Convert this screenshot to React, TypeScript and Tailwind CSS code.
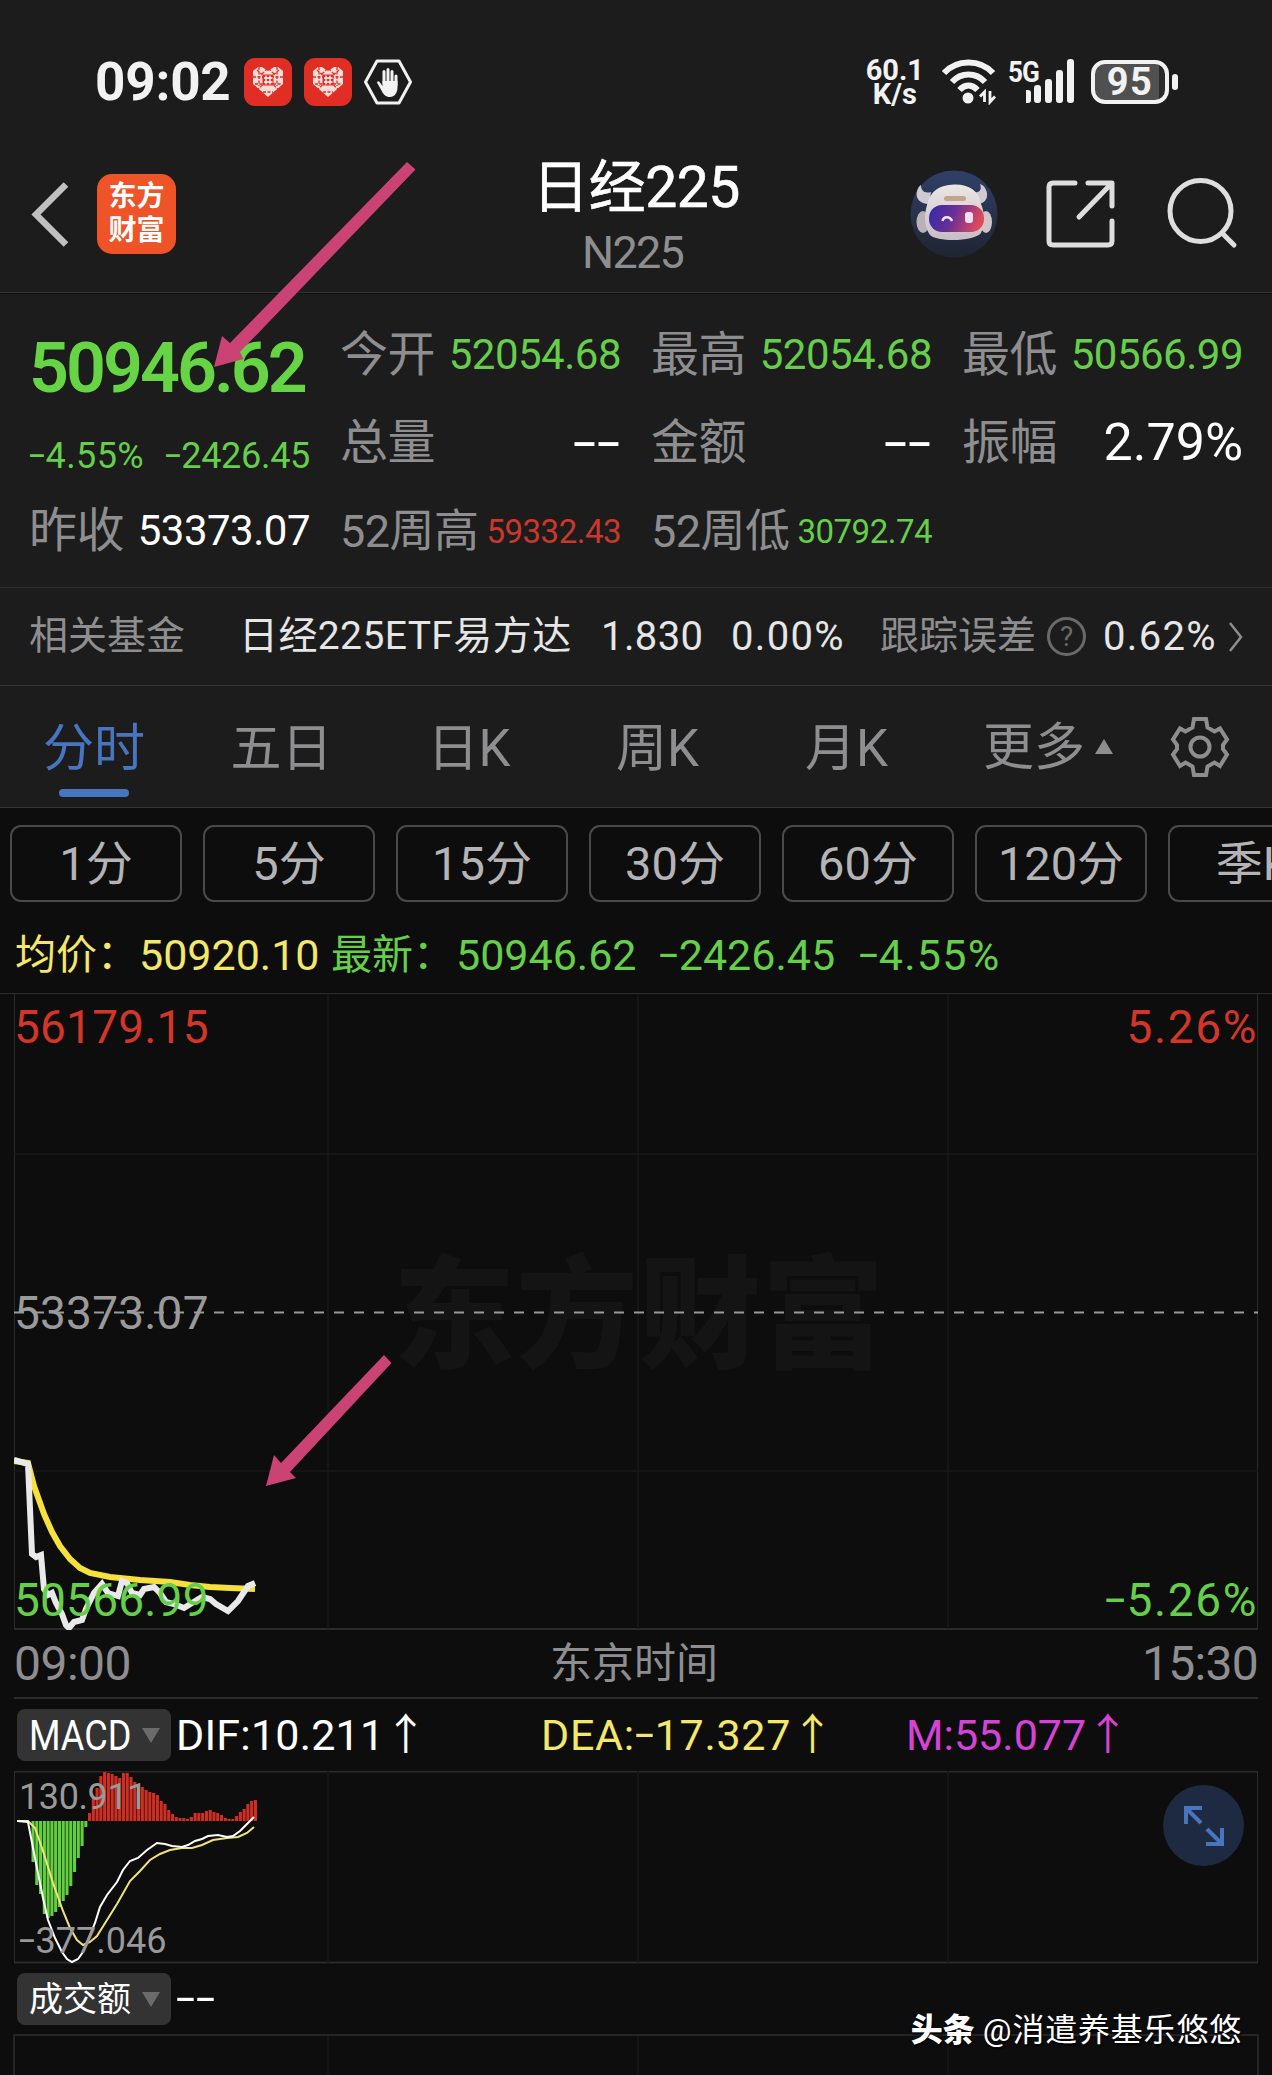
import type { ReactNode } from "react";

const PRICE_LINE =
  "0,466 14,470 18,560 22,563 27,561 30,595 34,601 38,599 42,609 48,620 52,631 55,634 60,628 68,626 72,615 80,599 88,590 94,599 104,602 108,587 113,589 118,599 126,601 130,595 140,593 146,599 152,608 160,610 170,614 178,609 188,603 196,605 202,610 214,617 224,607 234,592 241,589";

const AVG_LINE =
  "0,467 14,469 20,492 30,520 38,538 46,552 56,565 66,574 76,579 96,583 126,586 156,588 176,591 196,593 216,594 241,595";

// Histogram heights, measured from the zero axis
const GREEN_BARS = [41, 64, 73, 93, 97, 95, 91, 86, 80, 74, 65, 51, 37, 25, 6];
const RED_BARS = [
  8, 24, 33, 45, 49, 48, 47, 45, 43, 48, 48, 44, 39, 36, 34, 31, 29, 28, 26, 20, 17, 11, 7, 4, 3, 3, 2, 4, 8, 8, 8,
  10, 11, 9, 8, 6, 3, 2, 2, 5, 9, 12, 17, 20, 21,
];

const DIF_LINE =
  "3,50 14,51 19,77 24,102 29,127 34,149 41,167 48,181 53,188 58,191 64,188 69,181 74,169 81,152 86,136 93,124 103,111 109,99 116,90 124,87 133,79 143,72 151,73 158,75 168,76 174,74 181,70 188,68 194,65 204,64 213,66 219,65 226,60 233,53 240,46";

const DEA_LINE =
  "3,50 14,50 21,57 29,80 39,112 49,140 56,157 63,169 69,174 76,171 83,165 93,149 103,133 116,110 126,100 136,89 146,83 156,79 168,77 178,77 188,74 199,69 213,67 224,66 233,62 240,56";

const PERIODS = ["1分", "5分", "15分", "30分", "60分", "120分", "季K"];

/** Roboto's hyphen is short, so stretch it to about one digit. */
function Minus() {
  return <span className="inline-block w-[0.46em] origin-left -translate-y-[0.04em] scale-x-160">-</span>;
}

function NoValue() {
  return (
    <span className="flex pt-1 text-[52px] leading-none text-white">
      <Minus />
      <Minus />
    </span>
  );
}

function HeartBadge() {
  return (
    <div className="flex h-12 w-12 items-center justify-center rounded-[11px] bg-[#e02e24]">
      <svg width="36" height="32" viewBox="0 0 36 32" aria-hidden>
        <path d="M18 31L3 18V5L8 1H12L18 5L24 1H28L33 5V18Z" fill="#f7dcd8" />
        <path
          d="M3 11H33M7 4L29 24M29 4L7 24M9 1V20M27 1V20M5 18H31M12 8L18 2M24 8L18 2M13 26H23"
          stroke="#e02e24"
          strokeWidth="1.3"
          strokeDasharray="3 1.5"
          fill="none"
        />
        <rect x="12.5" y="8.5" width="11" height="11" fill="#e02e24" />
        <path d="M14 12H22.5M14 16H22.5M16 9.5V18.5M20 9.5V18.5" stroke="#fff" strokeWidth="1.3" />
      </svg>
    </div>
  );
}

function HandBadge() {
  return (
    <svg width="48" height="46" viewBox="0 0 48 46" fill="none" aria-hidden>
      <path d="M13 2H35L46.5 23L35 44H13L1.5 23Z" stroke="#f2f2f2" strokeWidth="3" strokeLinejoin="round" />
      <path d="M20 24V12.5M24 23V10.5M28 24V12.5M32 26V17" stroke="#f2f2f2" strokeWidth="3" strokeLinecap="round" />
      <path
        d="M18.5 22H33.5V28C33.5 34 30.5 38 26 38C21.5 38 19.5 35.5 17.5 31.5L13.2 24C12.5 22.5 14.5 21.5 15.6 23L18.5 27Z"
        fill="#f2f2f2"
      />
    </svg>
  );
}

function StatusBar() {
  return (
    <div className="flex h-[164px] items-center pr-[94px] pl-[95px]">
      <div className="w-[149px] text-[53px] leading-none font-bold tracking-[-0.2px] text-[#f2f2f2]">09:02</div>
      <div className="flex items-center gap-3">
        <HeartBadge />
        <HeartBadge />
        <HandBadge />
      </div>
      <div className="ml-auto flex items-center text-[#f2f2f2]">
        <div className="mr-[17px] text-center text-[29px] leading-[24px] font-bold">
          <div>60.1</div>
          <div>K/s</div>
        </div>
        <svg width="56" height="46" viewBox="0 0 56 46" fill="none" aria-hidden>
          <path d="M3 14C16 0 39 0 52 14" stroke="#f2f2f2" strokeWidth="6" />
          <path d="M11 23C20 13 35 13 44 23" stroke="#f2f2f2" strokeWidth="6" />
          <path d="M18.5 31C24 25 31 25 36.5 31" stroke="#f2f2f2" strokeWidth="6" />
          <circle cx="27" cy="39" r="5.5" fill="#f2f2f2" />
          <path d="M43.5 43V33L39 37.5M49 32V43L54 37.5" stroke="#f2f2f2" strokeWidth="2.8" />
        </svg>
        <div className="ml-[11px] flex h-[46px] w-[68px]">
          <span className="w-[18px] origin-left scale-x-90 text-[29px] leading-[26px] font-bold tracking-[-1px]">
            5G
          </span>
          <svg width="50" height="46" viewBox="0 0 50 46" fill="#f2f2f2" aria-hidden>
            <rect x="-2" y="31" width="7" height="13" rx="3" />
            <rect x="8" y="26" width="7" height="18" rx="3" />
            <rect x="19" y="20" width="7" height="24" rx="3" />
            <rect x="30" y="11" width="7" height="33" rx="3" />
            <rect x="41" y="0" width="7" height="44" rx="3" />
          </svg>
        </div>
        <div className="ml-[15px] flex h-11 w-[78px] items-center justify-center rounded-[14px] border-[4px] border-[#f2f2f2] bg-linear-to-r from-[#505050] from-92% to-[#2a2a2a] to-92% text-[38px] leading-none font-bold tracking-[1.5px]">
          95
        </div>
        <div className="ml-[3px] h-4 w-[6px] rounded-[3px] bg-[#f2f2f2]" />
      </div>
    </div>
  );
}

function RobotAvatar() {
  return (
    <svg width="88" height="88" viewBox="0 0 88 88" aria-hidden>
      <defs>
        <linearGradient id="robot-bg" x1="0" y1="0" x2="0" y2="1">
          <stop offset="0" stopColor="#2f4068" />
          <stop offset="1" stopColor="#1f2430" />
        </linearGradient>
        <linearGradient id="robot-visor" x1="0" y1="0" x2="1" y2="0.2">
          <stop offset="0" stopColor="#2f2ba8" />
          <stop offset="0.5" stopColor="#6b2f96" />
          <stop offset="1" stopColor="#dc4a5c" />
        </linearGradient>
        <linearGradient id="robot-head" x1="0" y1="0" x2="0" y2="1">
          <stop offset="0" stopColor="#ece6e6" />
          <stop offset="1" stopColor="#c8bdc4" />
        </linearGradient>
      </defs>
      <circle cx="44" cy="44" r="43.5" fill="url(#robot-bg)" />
      <path
        d="M19 34C10 34 5 28 7 21C8 18 9 16 11 15C11 20 14 24 21 22ZM69 34C76 33 79 26 76 20C75 17 73 15 70 14C72 19 70 23 65 22Z"
        fill="#cfcad2"
      />
      <ellipse cx="13" cy="52" rx="6.5" ry="11" fill="#b9b0b8" />
      <ellipse cx="76" cy="52" rx="6" ry="11" fill="#d0c4c8" />
      <path
        d="M44 14.5C58 14 69 20 71 34C75 43 75 55 71 63C64 72 27 72 20 65C14 57 14 45 17 35C20 21 29 15 44 14.5Z"
        fill="url(#robot-head)"
      />
      <rect x="34" y="26" width="22" height="5" rx="2.5" fill="#c5a48c" />
      <rect x="19" y="35" width="55" height="27" rx="13" fill="url(#robot-visor)" />
      <path d="M32.5 51C33.5 46 40 46 42 51" stroke="#eee8ff" strokeWidth="2.5" fill="none" />
      <rect x="55" y="42" width="8" height="11" rx="3" fill="#f5dff0" />
    </svg>
  );
}

function Header() {
  return (
    <header className="h-[294px] border-b-2 border-[#101010] bg-[#1c1c1c]">
      <StatusBar />
      <div className="grid h-[129px] grid-cols-[1fr_300px_1fr] border-b border-[#343434]">
        <div className="flex items-start pt-[10px] pl-[30px]">
          <svg className="mt-2 mr-7" width="39" height="66" viewBox="0 0 39 66" fill="none" aria-hidden>
            <path d="M36 2.5L6 32.5L36 62.5" stroke="#c0c0c0" strokeWidth="6.5" />
          </svg>
          <div className="flex h-20 w-[79px] flex-col items-center justify-center rounded-[15px] bg-[#ee5427] text-[28px] leading-[34px] font-bold text-white">
            <span>东方</span>
            <span>财富</span>
          </div>
        </div>
        <div className="text-center">
          <div className="mt-[-9px] text-[57px] leading-[66px] tracking-[-0.5px] text-white [-webkit-text-stroke:0.6px_#fff]">
            日经225
          </div>
          <div className="mt-[7px] mr-[7px] text-[45px] leading-[50px] tracking-[-1.8px] text-[#8e8e90]">N225</div>
        </div>
        <div className="flex justify-end pt-[6px] pr-[33px]">
          <RobotAvatar />
          <svg className="mt-[9px] ml-[48px]" width="70" height="70" viewBox="0 0 70 70" fill="none" aria-hidden>
            <path
              d="M29 4H7Q3 4 3 8V62Q3 66 7 66H62Q66 66 66 62V42M66 27V4H42M65 5L33 38"
              stroke="#dedede"
              strokeWidth="5"
              strokeLinejoin="round"
              strokeLinecap="round"
            />
          </svg>
          <svg className="mt-[6px] ml-[49px]" width="74" height="74" viewBox="0 0 74 74" fill="none" aria-hidden>
            <circle cx="35.5" cy="35" r="30.5" stroke="#dedede" strokeWidth="5" />
            <path d="M57 57L69 69" stroke="#dedede" strokeWidth="5" strokeLinecap="round" />
          </svg>
        </div>
      </div>
    </header>
  );
}

function Stat({ label, children }: { label: string; children: ReactNode }) {
  return (
    <div className="flex h-[88px] items-center justify-between text-[48px] leading-none tracking-[-0.5px] text-[#8e8e90]">
      <span>{label}</span>
      {children}
    </div>
  );
}

function QuotePanel() {
  return (
    <section className="grid h-[294px] grid-cols-[repeat(4,281px)] content-start gap-x-[30px] border-b border-[#2e2e2e] bg-[#1c1c1c] px-[29px] pt-[17px] whitespace-nowrap">
      <div className="row-span-2 flex flex-col">
        <div className="mt-[19px] text-[70px] leading-[76px] font-semibold tracking-[-3px] text-[#66d444]">
          50946.62
        </div>
        <div className="mt-[30px] flex justify-between text-[36px] leading-[40px] tracking-[0.4px] text-[#66cf4a]">
          <span>
            <Minus />
            4.55%
          </span>
          <span className="tracking-[-0.3px]">
            <Minus />
            2426.45
          </span>
        </div>
      </div>
      <Stat label="今开">
        <span className="text-[42px] text-[#66cf4a]">52054.68</span>
      </Stat>
      <Stat label="最高">
        <span className="text-[42px] text-[#66cf4a]">52054.68</span>
      </Stat>
      <Stat label="最低">
        <span className="text-[42px] text-[#66cf4a]">50566.99</span>
      </Stat>
      <Stat label="总量">
        <NoValue />
      </Stat>
      <Stat label="金额">
        <NoValue />
      </Stat>
      <Stat label="振幅">
        <span className="text-[52px] tracking-[0px] text-white">2.79%</span>
      </Stat>
      <Stat label="昨收">
        <span className="text-[42px] text-white">53373.07</span>
      </Stat>
      <div className="flex h-[88px] items-center justify-between text-[45px] leading-none tracking-[-0.5px] text-[#8e8e90]">
        <span>52周高</span>
        <span className="text-[33px] tracking-[-0.5px] text-[#c9382c]">59332.43</span>
      </div>
      <div className="flex h-[88px] items-center justify-between text-[45px] leading-none tracking-[-0.5px] text-[#8e8e90]">
        <span>52周低</span>
        <span className="text-[33px] tracking-[-0.5px] text-[#66cf4a]">30792.74</span>
      </div>
    </section>
  );
}

function RelatedFund() {
  return (
    <section className="flex h-[98px] items-center border-b border-[#363636] bg-[#1c1c1c] pl-[29px] text-[39px] leading-none whitespace-nowrap text-[#e6e6e6]">
      <span className="w-[210px] text-[#8e8e90]">相关基金</span>
      <span className="w-[362px] tracking-[0.4px]">日经225ETF易方达</span>
      <span className="w-[130px] text-[40px] tracking-[0.4px]">1.830</span>
      <span className="w-[149px] text-[40px] tracking-[1.3px]">0.00%</span>
      <span className="w-[167px] text-[#8e8e90]">跟踪误差</span>
      <span className="flex h-[39px] w-[39px] items-center justify-center rounded-full border-[3px] border-[#6a6a6c] text-[28px] text-[#6a6a6c]">
        ?
      </span>
      <span className="ml-[17px] w-[125px] text-[40px] tracking-[1.3px]">0.62%</span>
      <svg width="16" height="34" viewBox="0 0 16 34" fill="none" aria-hidden>
        <path d="M2 3L13 17L2 31" stroke="#8e8e90" strokeWidth="2.5" />
      </svg>
    </section>
  );
}

function ChartTabs() {
  return (
    <nav className="flex h-[122px] border-b border-[#363636] bg-[#1c1c1c] text-[51px] leading-[60px] text-[#8e8e90]">
      <div className="flex w-[188px] flex-col items-center pt-[33px] text-[#4775bf]">
        分时
        <div className="mt-[10px] h-2 w-[70px] rounded-full bg-[#4775bf]" />
      </div>
      <div className="w-[187px] pt-[33px] text-center">五日</div>
      <div className="w-[188px] pt-[33px] text-center">日K</div>
      <div className="w-[189px] pt-[33px] text-center">周K</div>
      <div className="w-[189px] pt-[33px] text-center">月K</div>
      <div className="flex w-[187px] items-center pt-[3px] pl-[42px]">
        更多
        <svg className="mb-[3px] ml-[10px]" width="18" height="15" viewBox="0 0 18 15" aria-hidden>
          <path d="M9 0L18 15H0Z" fill="#8e8e90" />
        </svg>
      </div>
      <div className="pt-[29px] pl-[40px]">
        <svg width="64" height="64" viewBox="0 0 64 64" fill="none" stroke="#8e8e90" strokeWidth="4" aria-hidden>
          <path d="M26 4H38L39.5 12.5L46.5 16.5L52 13.5L59 24.5L55 30V34L59 39.5L52 51L46.5 47.5L39.5 51.5L38 60H26L24.5 51.5L17.5 47.5L12 51L5 39.5L9 34V30L5 24.5L12 13.5L17.5 16.5L24.5 12.5Z" />
          <circle cx="32" cy="32" r="9.5" />
        </svg>
      </div>
    </nav>
  );
}

function PeriodChips() {
  return (
    <div className="flex gap-[21px] overflow-hidden pt-[17px] pl-[10px]">
      {PERIODS.map((p) => (
        <div
          key={p}
          className="flex h-[77px] w-[172px] shrink-0 items-center justify-center rounded-[11px] border-2 border-[#4a4a4a] text-[47px] leading-none text-[#b4b4b6]"
        >
          {p}
        </div>
      ))}
    </div>
  );
}

function PriceChart() {
  return (
    <div className="relative mx-[14px] h-[636px] text-[46px] leading-none">
      <div className="absolute inset-x-0 top-[236px] pl-[6px] text-center font-['Noto_Sans_CJK_SC'] text-[122px] leading-[150px] font-black tracking-[1px] text-[#141414]">
        东方财富
      </div>
      <svg className="absolute inset-0" width="1244" height="636" viewBox="0 0 1244 636" fill="none" aria-hidden>
        <path d="M0 0V635H1244V0" stroke="#2b2b2b" strokeWidth="2" />
        <path d="M314 0V635M624 0V635M934 0V635M0 160H1244M0 477H1244" stroke="#191919" strokeWidth="1.5" />
        <path d="M0 318.5H1244" stroke="#9a9a9a" strokeWidth="2" strokeDasharray="10 10" />
        <polyline points={AVG_LINE} stroke="#f6e13c" strokeWidth="6" />
        <polyline points={PRICE_LINE} stroke="#e9e9e9" strokeWidth="6" />
      </svg>
      <span className="absolute top-[10px] left-0 tracking-[0.2px] text-[#d33528]">56179.15</span>
      <span className="absolute top-[10px] right-0 tracking-[1.6px] text-[#d33528]">5.26%</span>
      <span className="absolute top-[296px] left-0 tracking-[0.2px] text-[#9a9a9a]">53373.07</span>
      <span className="absolute top-[583px] left-0 tracking-[0.2px] text-[#66cf4a]">50566.99</span>
      <span className="absolute top-[583px] right-0 tracking-[1.6px] text-[#66cf4a]">
        <Minus />
        5.26%
      </span>
    </div>
  );
}

function IndicatorPill({ children }: { children: ReactNode }) {
  return (
    <div className="flex h-[52px] w-[154px] items-center rounded-[8px] bg-[#333] pl-[12px] whitespace-nowrap text-white">
      <div className="w-[100px]">{children}</div>
      <svg className="ml-[13px]" width="18" height="15" viewBox="0 0 18 15" aria-hidden>
        <path d="M0 0H18L9 15Z" fill="#6b6b6b" />
      </svg>
    </div>
  );
}

function MacdChart() {
  return (
    <div className="relative mx-[14px] h-[193px] text-[36px] leading-none text-[#9a9a9a]">
      <svg className="absolute inset-0" width="1244" height="193" viewBox="0 0 1244 193" fill="none" aria-hidden>
        <path d="M0 191.5V0.5H1244V191.5Z" stroke="#2b2b2b" strokeWidth="2" />
        <path d="M314 0V192M624 0V192M934 0V192" stroke="#191919" strokeWidth="1.5" />
        {GREEN_BARS.map((h, i) => (
          <rect key={i} x={17.5 + i * 3.77} y={50} width="3.1" height={h} fill="#62cf40" />
        ))}
        {RED_BARS.map((h, i) => (
          <rect key={i} x={74 + i * 3.77} y={50 - h} width="3.1" height={h} fill="#cf2e22" />
        ))}
        <polyline points={DEA_LINE} stroke="#f0e478" strokeWidth="2" />
        <polyline points={DIF_LINE} stroke="#fff" strokeWidth="2" />
      </svg>
      <span className="absolute top-[8px] left-[5px] tracking-[-0.4px]">130.911</span>
      <span className="absolute top-[152px] left-[5px]">
        <Minus />
        377.046
      </span>
      <button
        type="button"
        className="absolute top-[14px] right-[14px] flex h-[81px] w-[81px] items-center justify-center rounded-full bg-[#1d2a42]"
      >
        <svg width="40" height="40" viewBox="0 0 40 40" fill="none" stroke="#4775bf" strokeWidth="4" aria-hidden>
          <path d="M18 2H2V18M2 2L17 17M38 22V38H22M38 38L23 23" />
        </svg>
      </button>
    </div>
  );
}

function Arrows() {
  return (
    <svg
      className="pointer-events-none absolute inset-0"
      width="1272"
      height="2075"
      viewBox="0 0 1272 2075"
      fill="#cb4374"
      aria-hidden
    >
      <path d="M407 162L415.5 169.5L240 352L243.5 359L214 367L222 336L230 343Z" />
      <path d="M384 1355L391.5 1363L290 1472L296 1478L266 1486L274 1455L281 1463Z" />
    </svg>
  );
}

export default function App() {
  return (
    <div className="relative h-[2075px] w-[1272px] overflow-hidden bg-[#0d0d0d] font-[Roboto,'Noto_Sans_CJK_SC',sans-serif]">
      <Header />
      <QuotePanel />
      <RelatedFund />
      <ChartTabs />
      <PeriodChips />
      <div className="flex h-[92px] items-center border-b border-[#2b2b2b] pt-[16px] pl-[15px] text-[43px] leading-none whitespace-nowrap text-[#66cf4a]">
        <span className="flex w-[316px] items-center text-[#f3e76c]">
          <span className="w-[124px] text-[41px]">均价：</span>50920.10
        </span>
        <span className="w-[125px] text-[41px]">最新：</span>
        <span className="w-[203px]">50946.62</span>
        <span className="w-[200px]">
          <Minus />
          2426.45
        </span>
        <span className="tracking-[1.3px]">
          <Minus />
          4.55%
        </span>
      </div>
      <PriceChart />
      <div className="mx-[14px] grid h-[69px] grid-cols-3 items-center border-b-2 border-[#2b2b2b] text-[48px] leading-none tracking-[-0.5px] text-[#8e8e90]">
        <span>09:00</span>
        <span className="pr-1 text-center text-[42px] tracking-[0px]">东京时间</span>
        <span className="text-right tracking-[-0.7px]">15:30</span>
      </div>
      <div className="flex h-[72px] items-center pl-[17px] text-[43px] leading-none">
        <IndicatorPill>
          <span className="inline-block origin-left scale-x-84">MACD</span>
        </IndicatorPill>
        <span className="ml-[5px] w-[365px] tracking-[0.2px] text-white">DIF:10.211↑</span>
        <span className="w-[365px] tracking-[0.7px] text-[#f3e76c]">
          DEA:
          <Minus />
          17.327↑
        </span>
        <span className="text-[#d443d4]">M:55.077↑</span>
      </div>
      <MacdChart />
      <div className="flex h-[70px] items-center pl-[17px] text-[34px] leading-none">
        <IndicatorPill>成交额</IndicatorPill>
        <span className="ml-[5px] flex text-[43px] text-white">
          <Minus />
          <Minus />
        </span>
      </div>
      <div className="mx-[13px] h-[60px] border-x-2 border-t-2 border-[#242424]">
        <svg width="1242" height="60" viewBox="0 0 1242 60" aria-hidden>
          <path d="M313 0V60M623 0V60M933 0V60" stroke="#191919" strokeWidth="1.5" />
        </svg>
      </div>
      <div className="absolute right-[30px] bottom-[25px] flex items-center gap-[8px] text-[32px] leading-10 text-white [text-shadow:1px_2px_2px_#000]">
        <span className="font-black">头条</span>
        <span className="tracking-[0.8px]">@消遣养基乐悠悠</span>
      </div>
      <Arrows />
    </div>
  );
}
